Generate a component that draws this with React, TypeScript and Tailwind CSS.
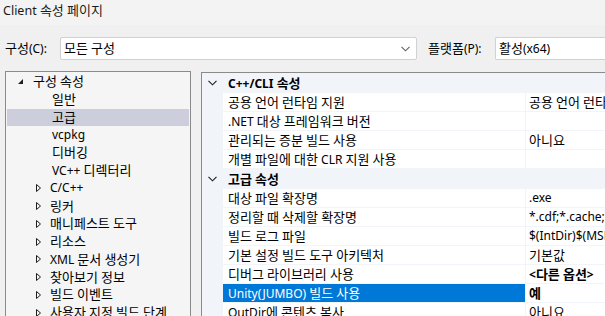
import React from 'react';

const font = "font-['Noto_Sans','Noto_Sans_CJK_KR',sans-serif]";

// 한글 구간만 살짝 크게 (맑은 고딕 폭에 맞춤)
const K: React.FC<{ t: string }> = ({ t }) => (
  <>
    {t.split(/([\uAC00-\uD7A3]+)/).map((part, i) =>
      /[\uAC00-\uD7A3]/.test(part) ? (
        <span key={i} className="text-[13px]">{part}</span>
      ) : (
        <React.Fragment key={i}>{part}</React.Fragment>
      )
    )}
  </>
);

type TreeItem = { label: string; level: 0 | 1; expandable?: boolean; open?: boolean; selected?: boolean };

const tree: TreeItem[] = [
  { label: '구성 속성', level: 0, open: true },
  { label: '일반', level: 1 },
  { label: '고급', level: 1, selected: true },
  { label: 'vcpkg', level: 1 },
  { label: '디버깅', level: 1 },
  { label: 'VC++ 디렉터리', level: 1 },
  { label: 'C/C++', level: 1, expandable: true },
  { label: '링커', level: 1, expandable: true },
  { label: '매니페스트 도구', level: 1, expandable: true },
  { label: '리소스', level: 1, expandable: true },
  { label: 'XML 문서 생성기', level: 1, expandable: true },
  { label: '찾아보기 정보', level: 1, expandable: true },
  { label: '빌드 이벤트', level: 1, expandable: true },
  { label: '사용자 지정 빌드 단계', level: 1, expandable: true },
];

type Row = { name: string; value?: string; bold?: boolean; selected?: boolean };
type Section = { title: string; rows: Row[] };

const sections: Section[] = [
  {
    title: 'C++/CLI 속성',
    rows: [
      { name: '공용 언어 런타임 지원', value: '공용 언어 런타임 지원 안 함' },
      { name: '.NET 대상 프레임워크 버전' },
      { name: '관리되는 증분 빌드 사용', value: '아니요' },
      { name: '개별 파일에 대한 CLR 지원 사용' },
    ],
  },
  {
    title: '고급 속성',
    rows: [
      { name: '대상 파일 확장명', value: '.exe' },
      { name: '정리할 때 삭제할 확장명', value: '*.cdf;*.cache;*.obj;*.obj.enc' },
      { name: '빌드 로그 파일', value: '$(IntDir)$(MSBuildProjectName).log' },
      { name: '기본 설정 빌드 도구 아키텍처', value: '기본값' },
      { name: '디버그 라이브러리 사용', value: '<다른 옵션>', bold: true },
      { name: 'Unity(JUMBO) 빌드 사용', value: '예', bold: true, selected: true },
      { name: 'OutDir에 콘텐츠 복사', value: '아니요' },
    ],
  },
];

const Chevron: React.FC<{ className?: string }> = ({ className }) => (
  <svg width="9" height="6" viewBox="0 0 9 6" className={className}>
    <path d="M0.5 0.8 L4.5 4.8 L8.5 0.8" fill="none" stroke="currentColor" strokeWidth="1.1" />
  </svg>
);

const App: React.FC = () => {
  return (
    <div className={`w-[605px] h-[316px] overflow-hidden bg-[#f0f0f0] text-[12px] text-black ${font}`}>
      {/* 제목 표시줄 */}
      <div className="h-[25px] bg-[#f3f3f3] pl-[3px] pt-[1px] leading-[18px] text-[12.5px] text-[#1a1a1a]">
        <K t="Client 속성 페이지" />
      </div>

      {/* 구성 / 플랫폼 */}
      <div className="flex items-center h-[23px] mt-[12px] whitespace-nowrap">
        <span className="w-[60px] shrink-0 pl-[5px] leading-[16px]"><K t="구성(C):" /></span>
        <div className="w-[357px] shrink-0 h-[23px] bg-white border border-[#d1d1d1] rounded-[2px] flex items-center justify-between pl-[3px] pr-[6px]">
          <span className="leading-[16px]"><K t="모든 구성" /></span>
          <Chevron className="text-[#606060]" />
        </div>
        <span className="ml-[11px] w-[67px] shrink-0 leading-[16px]"><K t="플랫폼(P):" /></span>
        <div className="flex-1 min-w-0 h-[23px] bg-white border border-[#d1d1d1] border-r-0 rounded-l-[2px] flex items-center pl-[3px]">
          <span className="leading-[16px]"><K t="활성(x64)" /></span>
        </div>
      </div>

      <div className="flex mt-[11px] h-[260px] whitespace-nowrap">
        {/* 트리 */}
        <div className="ml-[5px] w-[186px] shrink-0 h-full border border-[#8a8a8a] border-b-0 bg-[#f5f5f5] pt-[1px] overflow-hidden">
          {tree.map((t, i) => (
            <div
              key={i}
              className={`h-[17.75px] flex items-center leading-[16px] ${t.selected ? 'bg-[#cccedb] mx-[1px]' : ''}`}
            >
              {t.level === 0 ? (
                <>
                  <svg width="5" height="5" viewBox="0 0 5 5" className="ml-[12px] shrink-0">
                    <path d="M5 0 L5 5 L0 5 Z" fill="#1e1e1e" />
                  </svg>
                  <span className="ml-[10px]"><K t={t.label} /></span>
                </>
              ) : t.expandable ? (
                <>
                  <svg width="5" height="8" viewBox="0 0 5 8" className="ml-[30px] shrink-0">
                    <path d="M0.5 0.5 L4.5 4 L0.5 7.5 Z" fill="none" stroke="#1e1e1e" strokeWidth="1" />
                  </svg>
                  <span className="ml-[9px]"><K t={t.label} /></span>
                </>
              ) : (
                <span className={t.selected ? 'ml-[45px]' : 'ml-[46px]'}><K t={t.label} /></span>
              )}
            </div>
          ))}
        </div>

        {/* 속성 그리드 */}
        <div className="ml-[10px] flex-1 min-w-0 overflow-hidden h-full border-l border-t border-[#8a8a8a] bg-[#f1f4f9] mt-[1px]">
          {sections.map((s) => (
            <div key={s.title}>
              <div className="h-[20px] flex items-center">
                <Chevron className="ml-[6px] shrink-0 text-[#1e1e1e]" />
                <span className="ml-[11px] font-bold leading-[16px]"><K t={s.title} /></span>
              </div>
              {s.rows.map((r) => (
                <div key={r.name} className="h-[19px] flex pb-[1px]">
                  <div className="w-[21px] shrink-0" />
                  <div
                    className={`w-[302px] shrink-0 pl-[5px] flex items-center overflow-hidden leading-[16px] ${
                      r.selected ? 'bg-[#0078d7] text-white' : 'bg-white'
                    }`}
                  >
                    <span><K t={r.name} /></span>
                  </div>
                  <div
                    className={`flex-1 min-w-0 ml-[1px] pl-[3px] bg-white flex items-center overflow-hidden leading-[16px] ${
                      r.bold ? 'font-bold' : ''
                    }`}
                  >
                    <span>{r.value && <K t={r.value} />}</span>
                  </div>
                </div>
              ))}
            </div>
          ))}
        </div>
      </div>
    </div>
  );
};

export default App;
